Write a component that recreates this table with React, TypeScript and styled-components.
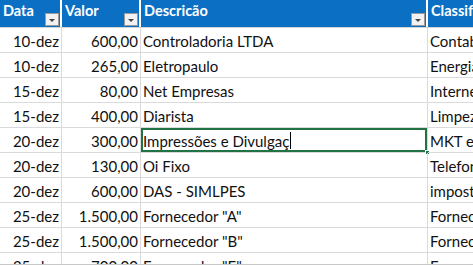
import { createGlobalStyle, styled } from "styled-components";

const GlobalStyle = createGlobalStyle`
	html, body {
		margin: 0;
		padding: 0;
		background: #ffffff;
		overflow: hidden;
	}
	body {
		font-family: Lato, "Liberation Sans", sans-serif;
	}
`;

const Sheet = styled.div`
	width: 473px;
	height: 265px;
	overflow: hidden;
	background: #ffffff;
	border-bottom: 1px solid #c8c8c8;
	box-sizing: border-box;
`;

const Row = styled.div`
	display: grid;
	grid-template-columns: 62px 79px 287px 1fr;
`;

const HeaderRow = styled(Row)`
	height: 28px;
	border-bottom: 1px solid #d4d4d4;
	box-sizing: border-box;
`;

const HeaderCell = styled.div`
	position: relative;
	background: #0b70c4;
	color: #ffffff;
	font-weight: 700;
	font-size: 14.5px;
	padding: 2px 0 0 3px;
	margin-right: 2px;
	height: 27px;
	box-sizing: border-box;
	white-space: nowrap;
	overflow: hidden;
	&:last-child {
		margin-right: 0;
	}
`;

const FilterButton = styled.div`
	position: absolute;
	right: 1px;
	bottom: 1px;
	width: 12px;
	height: 11px;
	background: #f2f2f2;
	border: 1px solid #9a9a9a;
	display: flex;
	align-items: center;
	justify-content: center;
	&:after {
		content: "";
		border-left: 3px solid transparent;
		border-right: 3px solid transparent;
		border-top: 3px solid #444444;
		margin-top: 1px;
	}
`;

const DataRow = styled(Row)`
	height: 25px;
`;

const Cell = styled.div<{ $align?: "left" | "right"; $selected?: boolean }>`
	position: relative;
	display: flex;
	align-items: center;
	justify-content: ${(p) => (p.$align === "right" ? "flex-end" : "flex-start")};
	padding: ${(p) => (p.$align === "right" ? "1px 2px 0 0" : "1px 0 0 2px")};
	font-size: 15px;
	color: #111111;
	border-right: 1px solid #dadada;
	border-bottom: 1px solid #dadada;
	box-sizing: border-box;
	white-space: nowrap;
	overflow: ${(p) => (p.$selected ? "visible" : "hidden")};
	box-shadow: ${(p) => (p.$selected ? "inset 0 0 0 2px #217346" : "none")};
	&:last-child {
		border-right: none;
	}
`;

const Handle = styled.span`
	position: absolute;
	right: -3px;
	bottom: -3px;
	width: 5px;
	height: 5px;
	background: #217346;
	border: 1px solid #ffffff;
	box-sizing: border-box;
`;

const Caret = styled.span`
	display: inline-block;
	width: 1px;
	height: 17px;
	background: #000000;
	margin-left: 1px;
`;

const rows = [
	["10-dez", "600,00", "Controladoria LTDA", "Contabilidade"],
	["10-dez", "265,00", "Eletropaulo", "Energia"],
	["15-dez", "80,00", "Net Empresas", "Internet"],
	["15-dez", "400,00", "Diarista", "Limpeza"],
	["20-dez", "300,00", "Impressões e Divulgaç", "MKT e Propaganda"],
	["20-dez", "130,00", "Oi Fixo", "Telefone"],
	["20-dez", "600,00", "DAS - SIMLPES", "impostos"],
	["25-dez", "1.500,00", "Fornecedor \"A\"", "Fornecedores"],
	["25-dez", "1.500,00", "Fornecedor \"B\"", "Fornecedores"],
	["25-dez", "700,00", "Fornecedor \"E\"", "Fornecedores"],
];

const SELECTED = 4;

export default function App(): JSX.Element {
	return (
		<>
			<GlobalStyle />
			<Sheet>
				<HeaderRow>
					<HeaderCell>
						Data
						<FilterButton />
					</HeaderCell>
					<HeaderCell>
						Valor
						<FilterButton />
					</HeaderCell>
					<HeaderCell>
						Descricão
						<FilterButton />
					</HeaderCell>
					<HeaderCell>Classificação</HeaderCell>
				</HeaderRow>
				{rows.map((r, i) => (
					<DataRow key={i}>
						<Cell $align="right">{r[0]}</Cell>
						<Cell $align="right">{r[1]}</Cell>
						<Cell $selected={i === SELECTED}>
							{r[2]}
							{i === SELECTED && (
								<>
									<Caret />
									<Handle />
								</>
							)}
						</Cell>
						<Cell>{r[3]}</Cell>
					</DataRow>
				))}
			</Sheet>
		</>
	);
}
